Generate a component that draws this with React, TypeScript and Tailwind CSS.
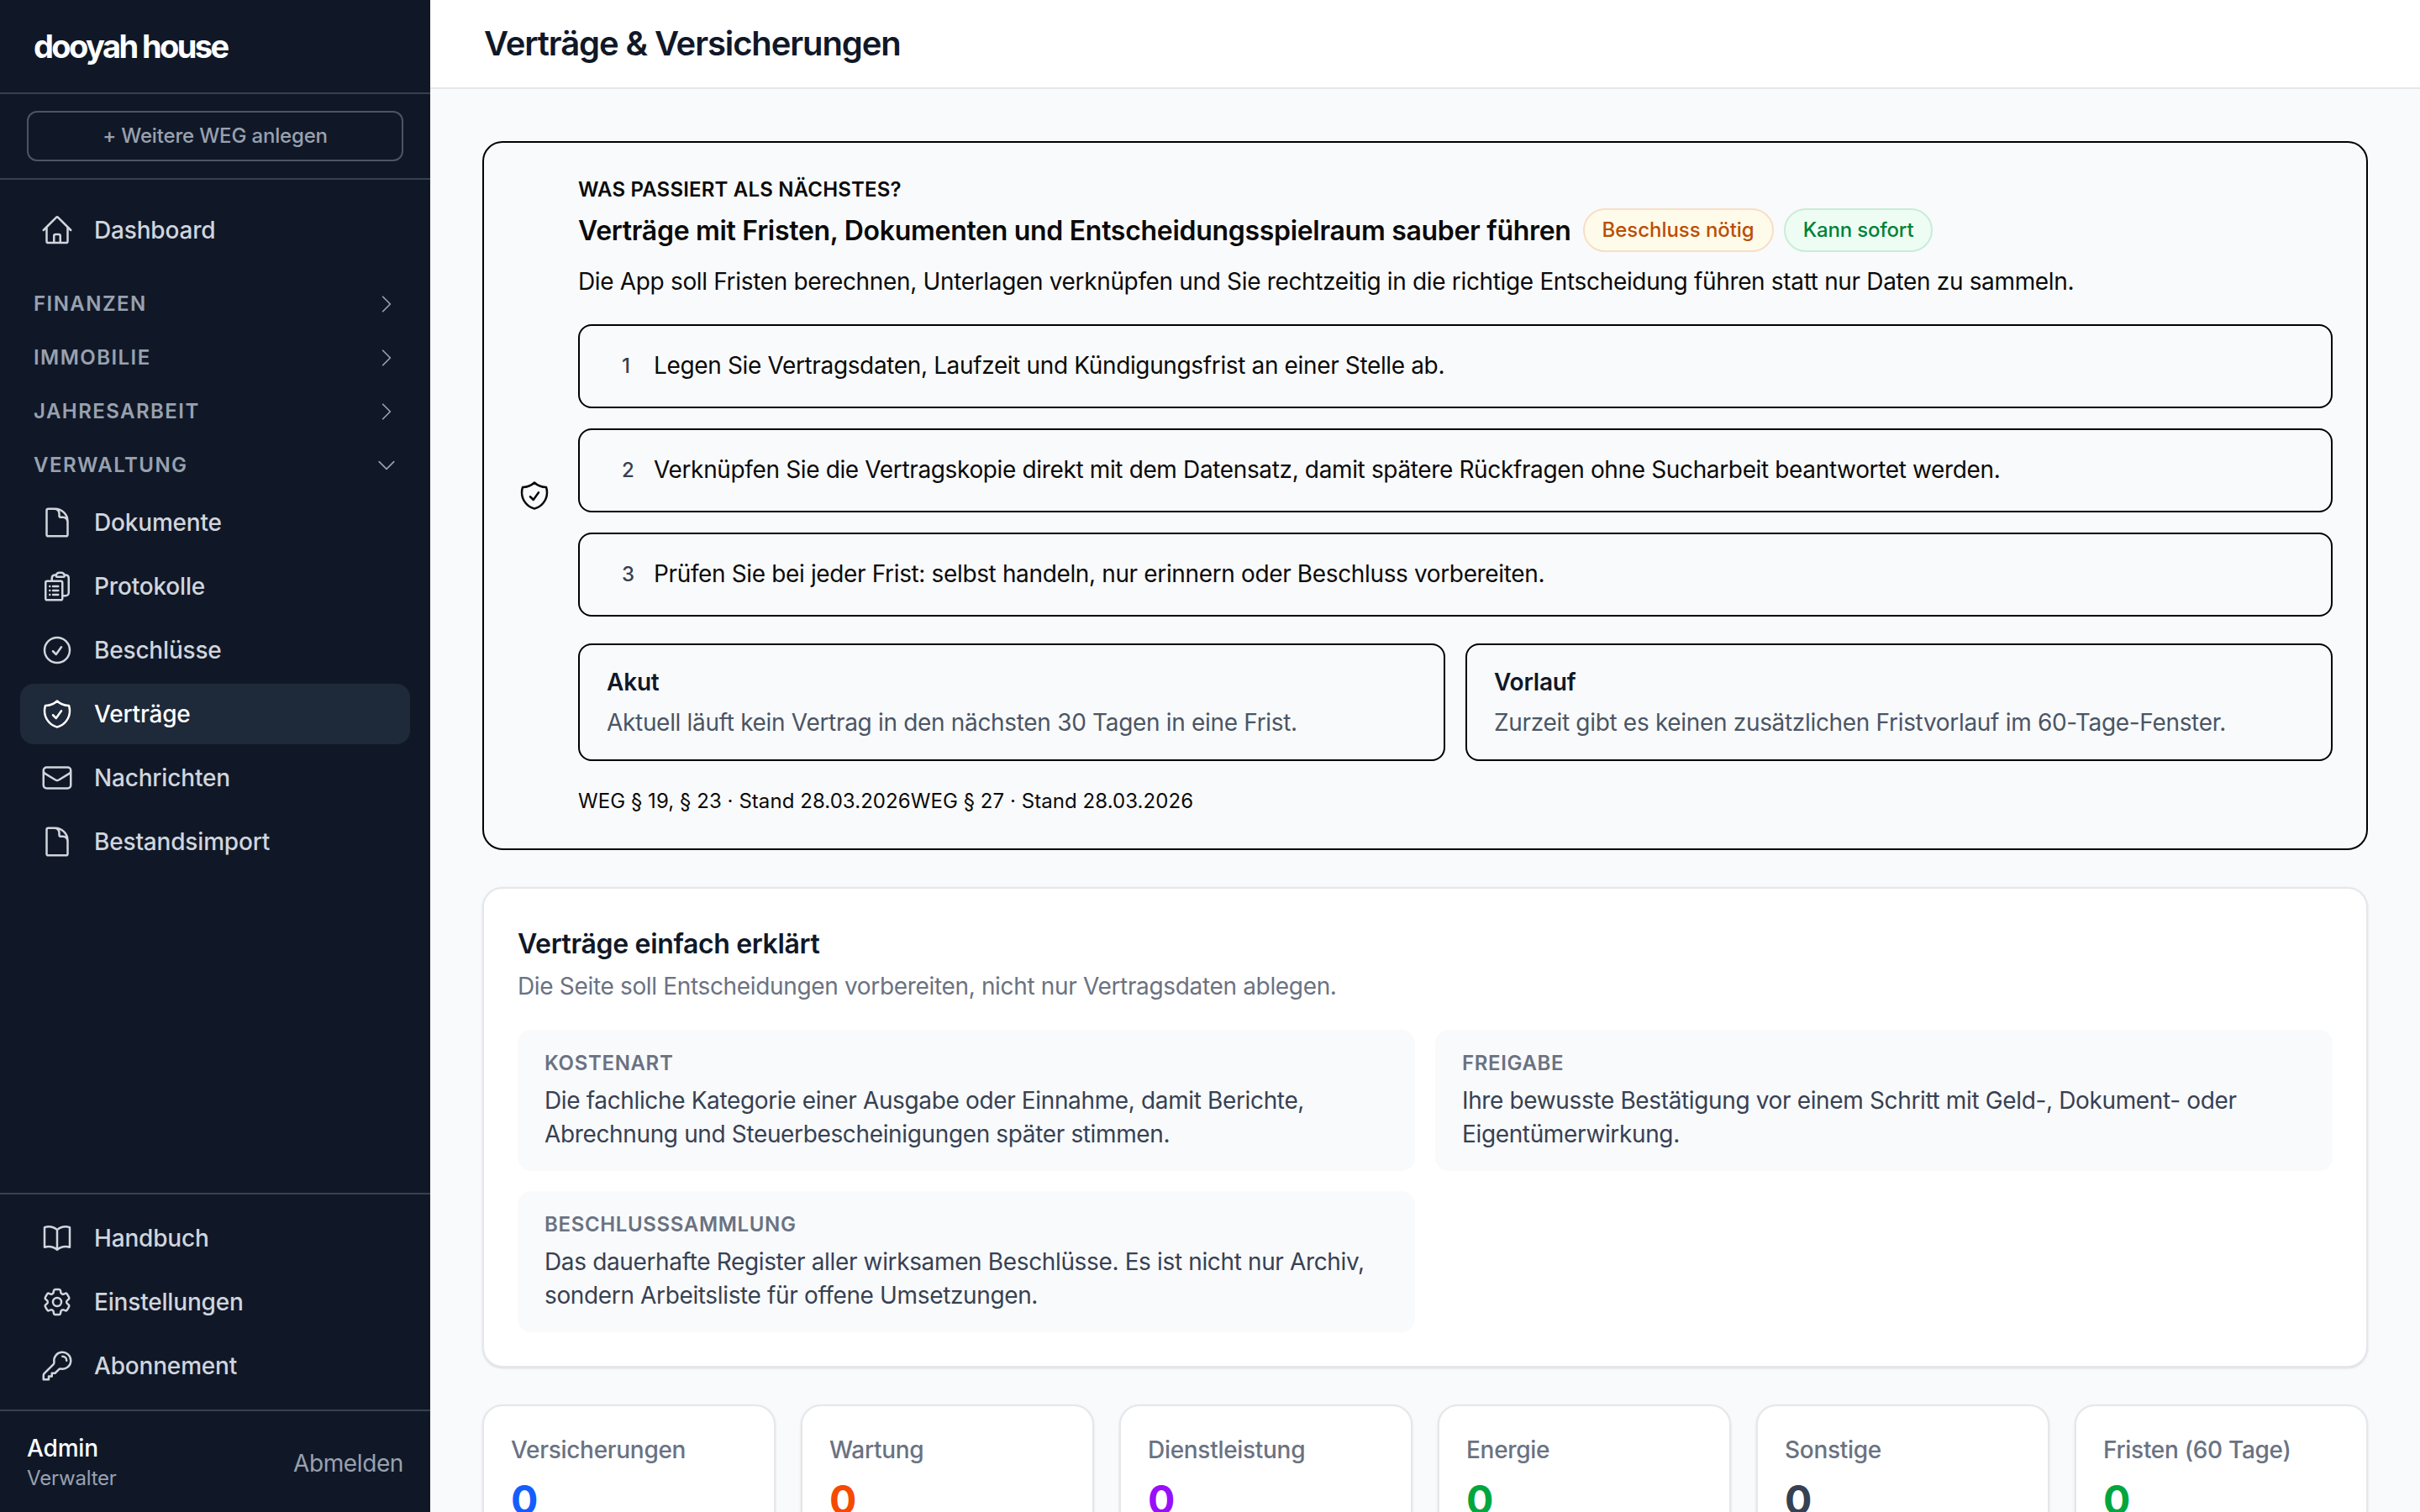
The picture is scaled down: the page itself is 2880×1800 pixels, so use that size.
import type { ComponentType } from "react"
import {
  HiOutlineBookOpen,
  HiOutlineCheckCircle,
  HiOutlineChevronDown,
  HiOutlineChevronRight,
  HiOutlineClipboardDocumentList,
  HiOutlineCog6Tooth,
  HiOutlineDocument,
  HiOutlineEnvelope,
  HiOutlineHome,
  HiOutlineKey,
  HiOutlineShieldCheck,
} from "react-icons/hi2"

type Icon = ComponentType<{ className?: string }>

const verwaltung: { icon: Icon; label: string; active?: boolean }[] = [
  { icon: HiOutlineDocument, label: "Dokumente" },
  { icon: HiOutlineClipboardDocumentList, label: "Protokolle" },
  { icon: HiOutlineCheckCircle, label: "Beschlüsse" },
  { icon: HiOutlineShieldCheck, label: "Verträge", active: true },
  { icon: HiOutlineEnvelope, label: "Nachrichten" },
  { icon: HiOutlineDocument, label: "Bestandsimport" },
]

const footerLinks: { icon: Icon; label: string }[] = [
  { icon: HiOutlineBookOpen, label: "Handbuch" },
  { icon: HiOutlineCog6Tooth, label: "Einstellungen" },
  { icon: HiOutlineKey, label: "Abonnement" },
]

const steps = [
  "Legen Sie Vertragsdaten, Laufzeit und Kündigungsfrist an einer Stelle ab.",
  "Verknüpfen Sie die Vertragskopie direkt mit dem Datensatz, damit spätere Rückfragen ohne Sucharbeit beantwortet werden.",
  "Prüfen Sie bei jeder Frist: selbst handeln, nur erinnern oder Beschluss vorbereiten.",
]

const glossary = [
  {
    term: "Kostenart",
    text: "Die fachliche Kategorie einer Ausgabe oder Einnahme, damit Berichte, Abrechnung und Steuerbescheinigungen später stimmen.",
  },
  {
    term: "Freigabe",
    text: "Ihre bewusste Bestätigung vor einem Schritt mit Geld-, Dokument- oder Eigentümerwirkung.",
  },
  {
    term: "Beschlusssammlung",
    text: "Das dauerhafte Register aller wirksamen Beschlüsse. Es ist nicht nur Archiv, sondern Arbeitsliste für offene Umsetzungen.",
  },
]

const stats = [
  { label: "Versicherungen", color: "text-blue-600" },
  { label: "Wartung", color: "text-orange-600" },
  { label: "Dienstleistung", color: "text-purple-600" },
  { label: "Energie", color: "text-green-600" },
  { label: "Sonstige", color: "text-gray-700" },
  { label: "Fristen (60 Tage)", color: "text-green-600" },
]

function NavRow({ icon: RowIcon, label, active }: { icon: Icon; label: string; active?: boolean }) {
  return (
    <div
      className={`flex items-center gap-6 rounded-2xl px-6 py-4 text-[28px] leading-[40px] font-medium tracking-[-0.18px] ${
        active ? "bg-gray-800 text-white" : "text-gray-300"
      }`}
    >
      <RowIcon className="h-10 w-10 shrink-0" />
      <span>{label}</span>
    </div>
  )
}

function GroupRow({ label, open }: { label: string; open?: boolean }) {
  return (
    <div className="flex h-14 items-center justify-between pr-[14px] pl-4 text-[24px] leading-8 font-semibold tracking-[1.45px] text-gray-400 uppercase">
      <span>{label}</span>
      {open ? <HiOutlineChevronDown className="h-7 w-7" /> : <HiOutlineChevronRight className="h-7 w-7" />}
    </div>
  )
}

function Sidebar() {
  return (
    <aside className="flex h-full w-[512px] shrink-0 flex-col bg-gray-900">
      <div className="flex h-[112px] items-center border-b-2 border-gray-700 px-10">
        <span className="text-[38px] leading-[56px] font-bold tracking-[-2.6px] text-white">dooyah house</span>
      </div>
      <div className="border-b-2 border-gray-700 px-8 py-5">
        <div className="flex h-[60px] items-center justify-center rounded-xl border-2 border-gray-600 text-[24px] leading-8 font-medium tracking-[-0.17px] text-gray-400">
          + Weitere WEG anlegen
        </div>
      </div>
      <nav className="flex flex-1 flex-col px-6 pt-6">
        <NavRow icon={HiOutlineHome} label="Dashboard" />
        <div className="mt-6 flex flex-col gap-2">
          <GroupRow label="Finanzen" />
          <GroupRow label="Immobilie" />
          <GroupRow label="Jahresarbeit" />
          <GroupRow label="Verwaltung" open />
        </div>
        <div className="mt-1 flex flex-col gap-1">
          {verwaltung.map((item) => (
            <NavRow key={item.label} icon={item.icon} label={item.label} active={item.active} />
          ))}
        </div>
      </nav>
      <div className="flex flex-col gap-1 border-t-2 border-gray-700 px-6 py-4">
        {footerLinks.map((item) => (
          <NavRow key={item.label} icon={item.icon} label={item.label} />
        ))}
      </div>
      <div className="flex items-center justify-between border-t-2 border-gray-700 px-8 py-6">
        <div>
          <div className="text-[28px] leading-[40px] font-medium tracking-[-0.15px] text-white">Admin</div>
          <div className="text-[24px] leading-8 tracking-[-0.2px] text-gray-400">Verwalter</div>
        </div>
        <span className="pt-[3px] text-[28px] leading-[40px] tracking-[-0.4px] text-gray-400">Abmelden</span>
      </div>
    </aside>
  )
}

function NextSteps() {
  return (
    <section className="flex items-center gap-8 rounded-3xl border-2 border-black p-10 text-[#0a0a0a]">
      <HiOutlineShieldCheck className="h-10 w-10 shrink-0" />
      <div className="min-w-0 flex-1">
        <p className="text-[24px] leading-8 font-semibold tracking-[0.18px] uppercase">Was passiert als Nächstes?</p>
        <div className="mt-1.5 flex items-center gap-[14px]">
          <h2 className="pt-[2px] text-[32px] leading-[48px] font-semibold tracking-[-0.3px]">
            Verträge mit Fristen, Dokumenten und Entscheidungsspielraum sauber führen
          </h2>
          <div className="flex gap-3">
            <span className="rounded-full border-2 border-[#f6dfc6] bg-amber-50 px-[21px] py-2 text-[24px] leading-8 font-medium tracking-[-0.05px] text-amber-700">
              Beschluss nötig
            </span>
            <span className="rounded-full border-2 border-[#c9ecd9] bg-[#eefdf4] px-[21px] py-2 text-[24px] leading-8 font-medium tracking-[-0.18px] text-green-700">
              Kann sofort
            </span>
          </div>
        </div>
        <p className="mt-[15px] text-[28px] leading-[40px] tracking-[-0.34px]">
          Die App soll Fristen berechnen, Unterlagen verknüpfen und Sie rechtzeitig in die richtige Entscheidung führen
          statt nur Daten zu sammeln.
        </p>
        <ol className="mt-[31px] flex flex-col gap-6">
          {steps.map((step, i) => (
            <li key={i} className="flex h-[100px] items-center gap-6 rounded-2xl border-2 border-black px-12">
              <span className="w-4 pl-0.5 text-[24px] leading-8 font-medium text-gray-700">{i + 1}</span>
              <span className="pb-[2px] text-[28px] leading-[40px] tracking-[-0.36px]">{step}</span>
            </li>
          ))}
        </ol>
        <div className="mt-8 grid grid-cols-2 gap-6">
          <div className="rounded-2xl border-2 border-black px-8 py-6">
            <div className="text-[28px] leading-[40px] font-semibold tracking-[-0.2px] text-gray-900">Akut</div>
            <div className="mt-2 text-[28px] leading-[40px] tracking-[-0.32px] text-gray-600">
              Aktuell läuft kein Vertrag in den nächsten 30 Tagen in eine Frist.
            </div>
          </div>
          <div className="rounded-2xl border-2 border-black px-8 py-6">
            <div className="text-[28px] leading-[40px] font-semibold tracking-[-0.2px] text-gray-900">Vorlauf</div>
            <div className="mt-2 text-[28px] leading-[40px] tracking-[-0.32px] text-gray-600">
              Zurzeit gibt es keinen zusätzlichen Fristvorlauf im 60-Tage-Fenster.
            </div>
          </div>
        </div>
        <p className="mt-8 text-[24px] leading-8 tracking-[0.06px]">
          <span>WEG § 19, § 23 · Stand 28.03.2026</span>
          <span>WEG § 27 · Stand 28.03.2026</span>
        </p>
      </div>
    </section>
  )
}

function Glossary() {
  return (
    <section className="mt-11 rounded-3xl border-2 border-gray-200 bg-white p-10 shadow-sm">
      <h2 className="pt-[2px] text-[32px] leading-[48px] font-semibold tracking-[-0.35px] text-gray-900">
        Verträge einfach erklärt
      </h2>
      <p className="mt-1.5 text-[28px] leading-[40px] tracking-[-0.34px] text-gray-500">
        Die Seite soll Entscheidungen vorbereiten, nicht nur Vertragsdaten ablegen.
      </p>
      <div className="mt-8 grid grid-cols-2 gap-6">
        {glossary.map((entry) => (
          <div key={entry.term} className="rounded-2xl bg-gray-50 px-8 py-6">
            <div className="text-[24px] leading-8 font-semibold tracking-[0.65px] text-gray-500 uppercase">
              {entry.term}
            </div>
            <div className="mt-2 text-[28px] leading-[40px] tracking-[-0.36px] text-gray-700">{entry.text}</div>
          </div>
        ))}
      </div>
    </section>
  )
}

export default function App() {
  return (
    <div className="flex h-screen overflow-hidden bg-gray-50 font-[Inter,sans-serif] antialiased">
      <Sidebar />
      <div className="flex min-w-0 flex-1 flex-col">
        <header className="flex h-[106px] shrink-0 items-center border-b-2 border-gray-200 bg-white px-16">
          <h1 className="text-[40px] leading-[56px] font-semibold tracking-[-1.1px] text-gray-900">
            Verträge &amp; Versicherungen
          </h1>
        </header>
        <main className="min-h-0 flex-1 overflow-hidden px-[62px] pt-[62px]">
          <NextSteps />
          <Glossary />
          <div className="mt-11 grid grid-cols-6 gap-[30px]">
            {stats.map((stat) => (
              <div key={stat.label} className="rounded-3xl border-2 border-gray-200 bg-white p-8 shadow-sm">
                <div className="text-[28px] leading-[40px] font-medium tracking-[-0.3px] text-gray-500">
                  {stat.label}
                </div>
                <div className={`mt-2 text-[48px] leading-[64px] font-bold ${stat.color}`}>0</div>
              </div>
            ))}
          </div>
        </main>
      </div>
    </div>
  )
}
